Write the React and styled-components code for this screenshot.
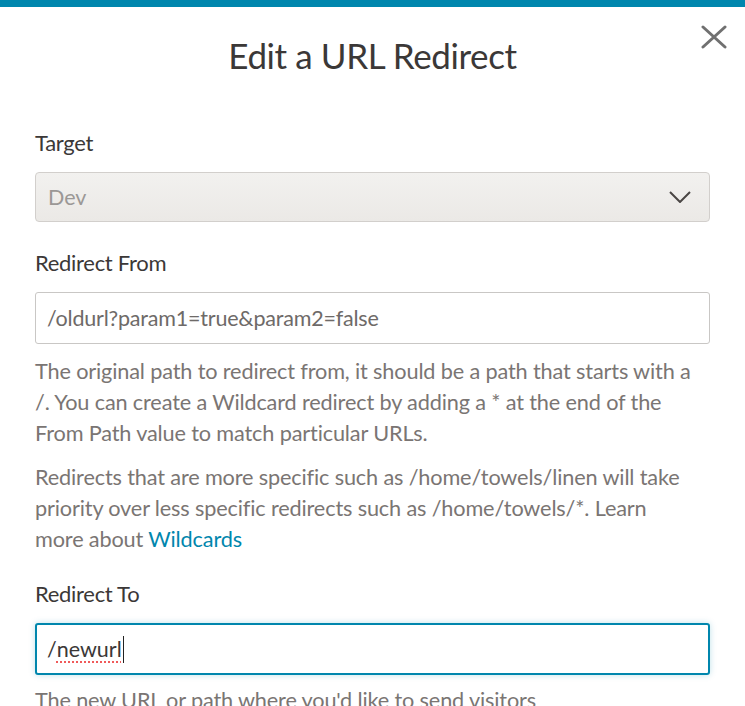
import React from 'react';
import styled, { createGlobalStyle } from 'styled-components';

const GlobalStyle = createGlobalStyle`
  html, body {
    margin: 0;
    padding: 0;
    background: #ffffff;
  }
  body {
    font-family: Lato, "Open Sans", sans-serif;
  }
`;

const Modal = styled.div`
  position: relative;
  width: 745px;
  height: 706px;
  overflow: hidden;
  background: #ffffff;
  border-top: 7px solid #0086ad;
  box-sizing: border-box;
`;

const Header = styled.div`
  padding-top: 27px;
  display: flex;
  justify-content: center;
`;

const Title = styled.h2`
  margin: 0;
  font-size: 35px;
  line-height: 42px;
  font-weight: 400;
  color: #3b3837;
  letter-spacing: -0.4px;
`;

const Close = styled.button`
  position: absolute;
  top: 18px;
  right: 18px;
  width: 26px;
  height: 24px;
  padding: 0;
  border: none;
  background: none;
  cursor: pointer;
`;

const Body = styled.div`
  padding: 54px 35px 0 35px;
  display: flex;
  flex-direction: column;
`;

const Field = styled.div`
  display: flex;
  flex-direction: column;
  margin-bottom: ${(p) => p.gap || 28}px;
`;

const Label = styled.label`
  font-size: 22px;
  line-height: 26px;
  color: #3b3837;
  margin-bottom: 16px;
  letter-spacing: -0.3px;
`;

const SelectBox = styled.div`
  height: 50px;
  box-sizing: border-box;
  border: 1px solid #d2cfcc;
  border-radius: 4px;
  background: linear-gradient(#f2f1ef, #ebe9e6);
  display: flex;
  align-items: center;
  justify-content: space-between;
  padding: 0 18px 0 12px;
  font-size: 21.5px;
  color: #9b9896;
`;

const TextInput = styled.input`
  height: 52px;
  box-sizing: border-box;
  border: 1px solid #c9c7c5;
  border-radius: 3px;
  padding: 0 11px;
  font-family: Lato, "Open Sans", sans-serif;
  font-size: 21.5px;
  letter-spacing: -0.2px;
  color: #6e6a68;
  outline: none;
`;

const FocusedInput = styled.div`
  height: 52px;
  box-sizing: border-box;
  border: 2px solid #0086ad;
  border-radius: 3px;
  box-shadow: 0 0 6px rgba(0, 134, 173, 0.25);
  padding: 0 10px;
  display: flex;
  align-items: center;
  font-size: 21.5px;
  color: #3b3837;
`;

const Misspelled = styled.span`
  text-decoration: underline dotted #f05a5a;
  text-decoration-thickness: 2px;
  text-underline-offset: 4px;
`;

const Caret = styled.span`
  display: inline-block;
  width: 1px;
  height: 27px;
  background: #222;
  margin-left: 1px;
`;

const Help = styled.p`
  max-width: 665px;
  margin: ${(p) => p.top || 12}px 0 0 0;
  font-size: 21.7px;
  line-height: 31px;
  color: #7a7573;
  letter-spacing: -0.15px;
`;

const Link = styled.a`
  color: #0086ad;
  text-decoration: none;
`;

const CloseIcon = () => (
  <svg width="26" height="24" viewBox="0 0 26 24">
    <path d="M2 2 L24 22 M24 2 L2 22" stroke="#707070" strokeWidth="3" strokeLinecap="round" />
  </svg>
);

const Chevron = () => (
  <svg width="22" height="12" viewBox="0 0 22 12">
    <path d="M1 1 L11 11 L21 1" stroke="#4a4644" strokeWidth="2" fill="none" />
  </svg>
);

const App = () => {
  return (
    <>
      <GlobalStyle />
      <Modal>
        <Header>
          <Title>Edit a URL Redirect</Title>
        </Header>
        <Close aria-label="Close">
          <CloseIcon />
        </Close>
        <Body>
          <Field>
            <Label>Target</Label>
            <SelectBox>
              <span>Dev</span>
              <Chevron />
            </SelectBox>
          </Field>
          <Field gap={26}>
            <Label>Redirect From</Label>
            <TextInput defaultValue="/oldurl?param1=true&param2=false" />
            <Help>
              The original path to redirect from, it should be a path that starts with a /. You can
              create a Wildcard redirect by adding a * at the end of the From Path value to match
              particular URLs.
            </Help>
            <Help top={13}>
              Redirects that are more specific such as /home/towels/linen will take priority over
              less specific redirects such as /home/towels/*. Learn more about{' '}
              <Link href="#">Wildcards</Link>
            </Help>
          </Field>
          <Field>
            <Label>Redirect To</Label>
            <FocusedInput>
              /<Misspelled>newurl</Misspelled>
              <Caret />
            </FocusedInput>
            <Help top={10}>The new URL or path where you'd like to send visitors</Help>
          </Field>
        </Body>
      </Modal>
    </>
  );
};

export default App;
